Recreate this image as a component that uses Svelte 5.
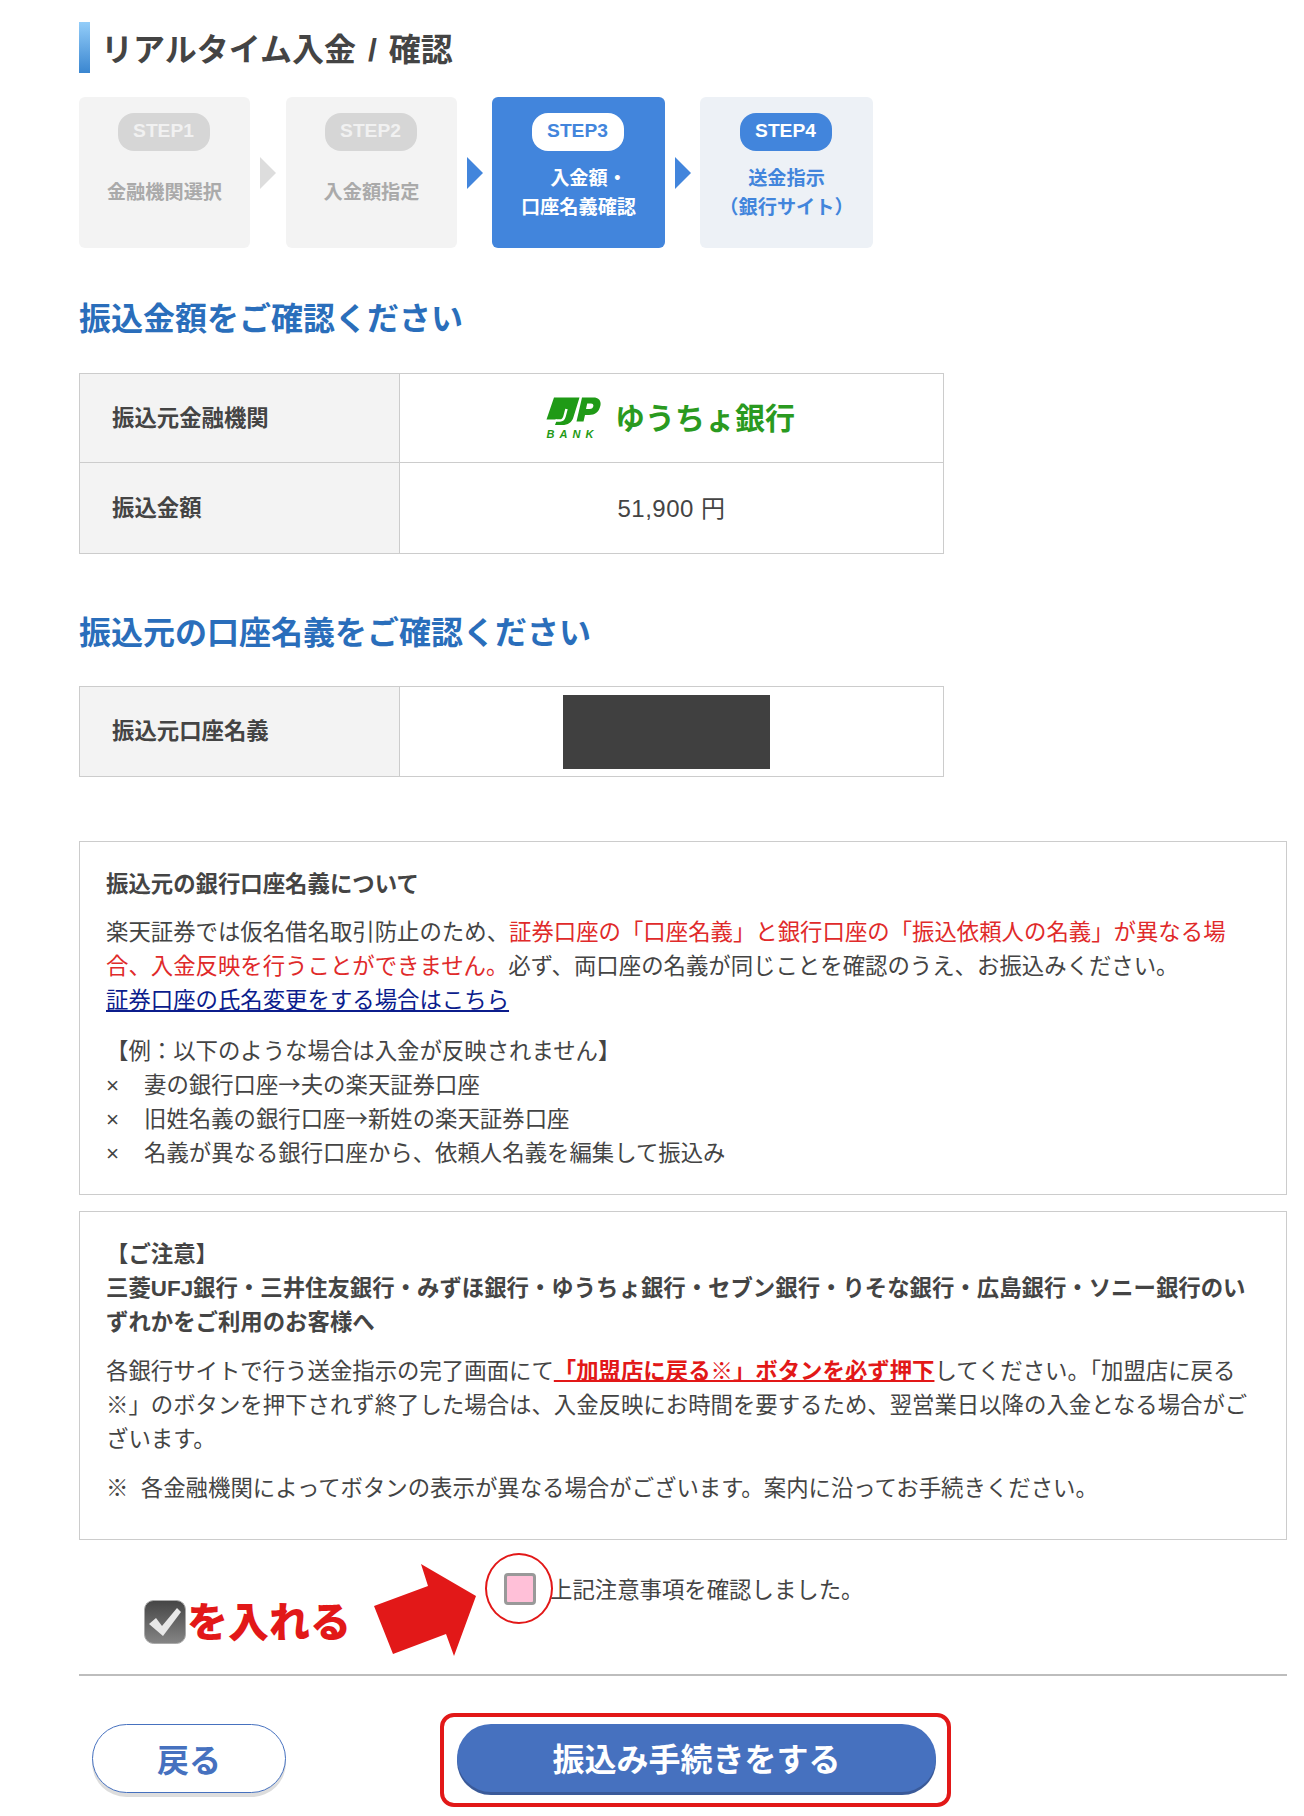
<script>
    const steps = [
        { label: 'STEP1', lines: ['金融機関選択'], state: 'done' },
        { label: 'STEP2', lines: ['入金額指定'], state: 'done' },
        { label: 'STEP3', lines: ['入金額・', '口座名義確認'], state: 'current' },
        { label: 'STEP4', lines: ['送金指示', '（銀行サイト）'], state: 'next' }
    ];

    let confirmed = false;
</script>

<div class="page">
    <h1 class="title"><span class="title-bar"></span><span class="title-text">リアルタイム入金 / 確認</span></h1>

    <!-- Step indicator -->
    <ol class="steps">
        {#each steps as step, index}
            {#if index > 0}
                <li class="step-arrow {step.state === 'current' || step.state === 'next' ? 'on' : ''}" aria-hidden="true"></li>
            {/if}
            <li class="step {step.state}">
                <span class="step-pill">{step.label}</span>
                <span class="step-text">
                    {#each step.lines as line}
                        <span>{line}</span>
                    {/each}
                </span>
            </li>
        {/each}
    </ol>

    <h2 class="section-title first">振込金額をご確認ください</h2>
    <table class="info">
        <tbody>
            <tr class="short">
                <th>振込元金融機関</th>
                <td class="center">
                    <div class="bank">
                        <div class="bank-mark">
                            <svg width="57" height="29" viewBox="0 0 57 29">
                                <path d="M10 0.5H35.5L29.5 20C28 25.500 24 28 18 28H11L13 22.500H2.500Z" fill="#1f9a16" />
                                <path d="M22.500 12L20.500 19.500C19.800 22 18.500 23.500 16 23.500H11.500" fill="none" stroke="#ffffff" stroke-width="2.500" />
                                <path d="M38 0.5H49.500C55 0.500 57.500 4 56.300 9C55 15 51 18 45 18H41L39.500 24.500H32.500ZM43.200 6.500L42 12H45.500C48 12 49 10.800 49.300 9.200C49.600 7.500 48.800 6.500 47 6.500Z" fill="#1f9a16" fill-rule="evenodd" />
                            </svg>
                            <span class="bank-word">BANK</span>
                        </div>
                        <span class="bank-name">ゆうちょ銀行</span>
                    </div>
                </td>
            </tr>
            <tr class="tall">
                <th>振込金額</th>
                <td class="center amount">51,900 円</td>
            </tr>
        </tbody>
    </table>

    <h2 class="section-title second">振込元の口座名義をご確認ください</h2>
    <table class="info">
        <tbody>
            <tr>
                <th>振込元口座名義</th>
                <td><div class="redacted"></div></td>
            </tr>
        </tbody>
    </table>

    <!-- Notes -->
    <section class="note note-name">
        <h3>振込元の銀行口座名義について</h3>
        <p>楽天証券では仮名借名取引防止のため、<span class="red">証券口座の「口座名義」と銀行口座の「振込依頼人の名義」が異なる場合、入金反映を行うことができません。</span>必ず、両口座の名義が同じことを確認のうえ、お振込みください。<br /><a href="#change">証券口座の氏名変更をする場合はこちら</a></p>
        <p>【例：以下のような場合は入金が反映されません】</p>
        <ul>
            <li><span>×</span>妻の銀行口座→夫の楽天証券口座</li>
            <li><span>×</span>旧姓名義の銀行口座→新姓の楽天証券口座</li>
            <li><span>×</span>名義が異なる銀行口座から、依頼人名義を編集して振込み</li>
        </ul>
    </section>

    <section class="note note-caution">
        <h3>【ご注意】<br />三菱UFJ銀行・三井住友銀行・みずほ銀行・ゆうちょ銀行・セブン銀行・りそな銀行・広島銀行・ソニー銀行のいずれかをご利用のお客様へ</h3>
        <p>各銀行サイトで行う送金指示の完了画面にて<strong class="red-strong">「加盟店に戻る※」ボタンを必ず押下</strong>してください。「加盟店に戻る※」のボタンを押下されず終了した場合は、入金反映にお時間を要するため、翌営業日以降の入金となる場合がございます。</p>
        <p>※&nbsp; 各金融機関によってボタンの表示が異なる場合がございます。案内に沿ってお手続きください。</p>
    </section>

    <!-- Confirmation row, with the red annotation drawn over it -->
    <div class="confirm">
        <label class="confirm-label">
            <input type="checkbox" bind:checked={confirmed} />
            <span>上記注意事項を確認しました。</span>
        </label>

        <span class="ring"></span>
        <div class="hint">
            <svg class="hint-check" width="42" height="44" viewBox="0 0 42 44">
                <defs>
                    <linearGradient id="boxFill" x1="0" y1="0" x2="0" y2="1">
                        <stop offset="0" stop-color="#454545" />
                        <stop offset="1" stop-color="#858585" />
                    </linearGradient>
                </defs>
                <rect x="0.500" y="0.500" width="41" height="43" rx="9" fill="url(#boxFill)" stroke="#aaa" />
                <path d="M5 24L12 18L18 26L33 8L37 12L19 36Z" fill="#e8e8e8" />
            </svg>
            <span class="hint-text">を入れる</span>
        </div>
        <svg class="hint-arrow" width="104" height="94" viewBox="0 0 104 94">
            <polygon points="1,42 55,22 48,0 103,32 81,92 73,70 20,90" fill="#e21818" />
        </svg>
    </div>

    <hr />

    <div class="actions">
        <button class="btn-back" type="button">戻る</button>
        <div class="submit-frame">
            <button class="btn-submit" type="button">振込み手続きをする</button>
        </div>
    </div>
</div>

<style>
    :global(body) {
        margin: 0;
        background: #ffffff;
    }

    .page {
        width: 1208px;
        margin-left: 79px;
        padding: 22px 0 8px;
        font-family: "Liberation Sans", "Noto Sans CJK JP", sans-serif;
        font-size: 22.4px;
        line-height: 34px;
        color: #444444;
    }

    .title {
        display: flex;
        align-items: center;
        gap: 11px;
        height: 51px;
        margin: 0;
        font-size: 32px;
        font-weight: 700;
        line-height: 51px;
        word-spacing: 3px;
        color: #444444;
        white-space: pre;
    }

    .title-bar {
        width: 11px;
        height: 51px;
        background: linear-gradient(#93cdf9, #3a86d0);
    }

    .title-text {
        padding-top: 5px;
    }

    /* Steps */
    .steps {
        display: flex;
        height: 151px;
        margin: 24px 0 0;
        padding: 0;
        list-style: none;
    }

    .step {
        display: flex;
        flex-direction: column;
        align-items: center;
        width: 171px;
        padding-top: 16px;
        box-sizing: border-box;
        border-radius: 6px;
        font-size: 19.2px;
        font-weight: 700;
        line-height: 29px;
    }

    .step-pill {
        width: 92px;
        height: 38px;
        margin-right: 2px;
        border-radius: 16px;
        line-height: 35px;
        text-align: center;
    }

    .step-text {
        display: flex;
        flex: 1;
        flex-direction: column;
        align-items: center;
        justify-content: center;
        padding-bottom: 14px;
    }

    .step.done {
        background: #f3f3f3;
        color: #aaaaaa;
    }

    .step.done .step-pill {
        background: #d6d6d6;
        color: #f1f1f1;
    }

    .step.current {
        width: 173px;
        background: #4285dc;
        color: #ffffff;
    }

    .step.current .step-pill {
        background: #ffffff;
        color: #4285dc;
    }

    /* the reference sets the first line of this step off-centre */
    .step.current .step-text span:first-child {
        margin-left: 20px;
    }

    .step.next {
        width: 173px;
        background: #edf1f6;
        color: #4285dc;
    }

    .step.next .step-pill {
        background: #4285dc;
        color: #ffffff;
    }

    .step-arrow {
        display: flex;
        align-items: center;
        justify-content: center;
        width: 35px;
    }

    .step-arrow:nth-child(2) {
        width: 36px;
    }

    .step-arrow::before {
        content: "";
        border-top: 16px solid transparent;
        border-bottom: 16px solid transparent;
        border-left: 16px solid #dddddd;
    }

    .step-arrow.on::before {
        border-left-color: #4285dc;
    }

    /* Section headings */
    .section-title {
        margin: 0;
        font-size: 32px;
        font-weight: 700;
        line-height: 48px;
        color: #2a6ebb;
    }

    .section-title.first {
        margin-top: 46.5px;
        margin-bottom: 30.5px;
    }

    .section-title.second {
        margin-top: 54.5px;
        margin-bottom: 29.5px;
    }

    /* Tables */
    .info {
        width: 865px;
        border-collapse: collapse;
        table-layout: fixed;
    }

    .info th,
    .info td {
        height: 88px;
        padding: 1px 0 0;
        border: 1.5px solid #cccccc;
    }

    .info .short th,
    .info .short td {
        height: 87px;
    }

    .info .tall th,
    .info .tall td {
        height: 89px;
    }

    .info th {
        width: 320px;
        padding-left: 32px;
        box-sizing: border-box;
        background: #f3f3f3;
        font-weight: 700;
        text-align: left;
    }

    .center {
        text-align: center;
    }

    .amount {
        font-size: 24px;
        letter-spacing: 0.5px;
    }

    .bank {
        display: flex;
        align-items: center;
        justify-content: center;
        gap: 14px;
        padding-right: 4px;
    }

    .bank-mark {
        display: flex;
        flex-direction: column;
        align-items: center;
        height: 44px;
    }

    .bank-mark svg {
        display: block;
    }

    .bank-word {
        margin-top: 3px;
        font-size: 11px;
        font-style: italic;
        font-weight: 700;
        line-height: 11px;
        letter-spacing: 5px;
        color: #1f9a16;
    }

    .bank-name {
        font-size: 30px;
        font-weight: 700;
        line-height: 40px;
        color: #2a9a20;
    }

    .redacted {
        width: 207px;
        height: 74px;
        margin-left: 163px;
        background: #404040;
    }

    /* Notes */
    .note {
        padding: 26px 26px 26px;
        border: 1.5px solid #cccccc;
    }

    .note-name {
        margin-top: 64px;
        height: 300px;
    }

    .note-caution {
        margin-top: 16px;
        height: 275px;
    }

    .note h3 {
        margin: 0;
        font-size: 22.4px;
        font-weight: 700;
        line-height: 34px;
    }

    .note p {
        margin: 14px 0 0;
    }

    .note-name p + p {
        margin-top: 17px;
    }

    .note-caution p {
        margin-top: 15px;
    }

    .note ul {
        margin: -3px 0 0;
        padding: 0;
        font-family: "Noto Sans CJK JP", sans-serif;
        list-style: none;
    }

    .note li {
        display: flex;
    }

    .note li span {
        width: 38px;
        flex: none;
        margin-bottom: -3px;
        padding-top: 3px;
        font-family: "Liberation Sans", sans-serif;
    }

    .red {
        color: #e02a2a;
    }

    .red-strong {
        color: #e21818;
        font-weight: 700;
        text-decoration: underline;
        text-decoration-thickness: 2px;
    }

    a {
        color: #0b1c8c;
    }

    /* Confirmation */
    .confirm {
        position: relative;
        height: 134px;
        box-sizing: border-box;
        padding: 33px 0 0 425px;
    }

    .confirm-label {
        display: flex;
        align-items: center;
        gap: 14px;
        height: 32px;
    }

    .confirm-label input {
        width: 32px;
        height: 32px;
        margin: 0;
        box-sizing: border-box;
        appearance: none;
        background: #ffc0d8;
        border: 3px solid #999999;
        border-radius: 4px;
    }

    .confirm-label span {
        padding-top: 4px;
    }

    .ring {
        position: absolute;
        left: 406px;
        top: 13px;
        width: 68px;
        height: 71px;
        box-sizing: border-box;
        border: 2.5px solid #e21818;
        border-radius: 50%;
    }

    .hint {
        position: absolute;
        left: 65px;
        top: 60px;
        display: flex;
        align-items: center;
        gap: 1px;
        height: 44px;
        font-size: 41px;
        font-weight: 900;
        color: #e21818;
    }

    .hint-text {
        margin-top: 2px;
    }

    .hint-check {
        display: block;
    }

    .hint-arrow {
        position: absolute;
        left: 294px;
        top: 24px;
    }

    hr {
        height: 2px;
        margin: 0;
        border: 0;
        background: #bdbdbd;
    }

    /* Buttons */
    .actions {
        display: flex;
        align-items: flex-start;
        margin-top: 37px;
    }

    button {
        font-family: inherit;
        font-size: 32px;
        font-weight: 700;
        cursor: pointer;
    }

    .btn-back {
        width: 194px;
        height: 69px;
        margin: 11px 0 0 13px;
        padding: 0 0 2px;
        background: #ffffff;
        border: 1.5px solid #4671bf;
        border-radius: 35px;
        box-shadow: 0 4px 0 #dddddd;
        color: #4671bf;
    }

    .submit-frame {
        margin-left: 154px;
        padding: 7px 11px 11px 13px;
        border: 4px solid #e21818;
        border-radius: 14px;
    }

    .btn-submit {
        display: block;
        width: 479px;
        height: 68px;
        padding: 0 0 2px;
        background: #4671bf;
        border: 0;
        border-radius: 34px;
        box-shadow: 0 3px 0 #3a5a99;
        color: #ffffff;
    }
</style>
